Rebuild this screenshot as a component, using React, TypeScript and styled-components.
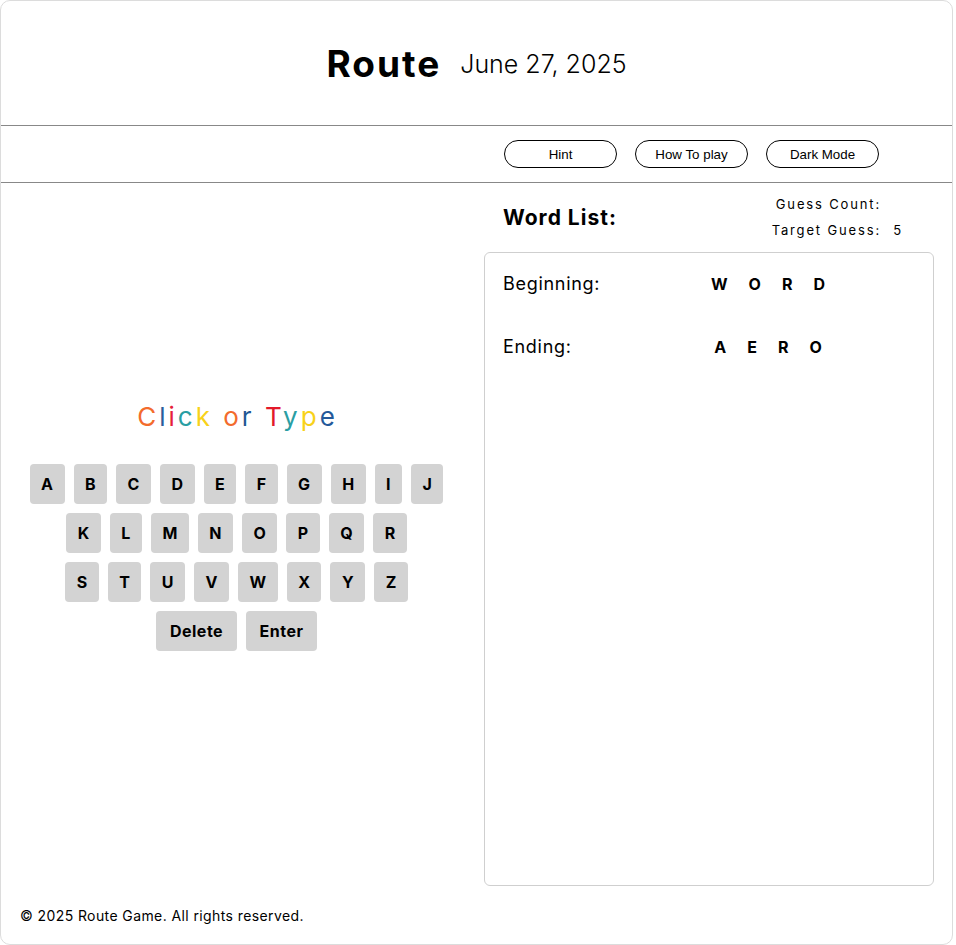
import React from "react";
import styled, { createGlobalStyle } from "styled-components";

const Global = createGlobalStyle`
  html, body { margin: 0; padding: 0; background: #ffffff; }
  body { font-family: "Inter", "Open Sans", sans-serif; color: #000; }
  * { box-sizing: border-box; }
`;

const Card = styled.div`
  width: 953px;
  height: 945px;
  border: 1px solid #dcdcdc;
  border-radius: 10px;
  background: #fff;
  display: flex;
  flex-direction: column;
  overflow: hidden;
`;

const Header = styled.header`
  height: 125px;
  flex-shrink: 0;
  display: flex;
  align-items: center;
  justify-content: center;
  gap: 19px;
  border-bottom: 1px solid #888;
  padding-top: 1px;
`;

const Title = styled.h1`
  margin: 0;
  font-size: 37px;
  font-weight: 700;
  letter-spacing: 2px;
`;

const DateText = styled.span`
  font-size: 25px;
  font-weight: 300;
  letter-spacing: 0;
`;

const NavBar = styled.nav`
  height: 57px;
  flex-shrink: 0;
  display: flex;
  align-items: center;
  justify-content: flex-end;
  gap: 18px;
  padding-right: 73px;
  border-bottom: 1px solid #888;
`;

const PillButton = styled.button`
  width: 113px;
  height: 28px;
  border: 1px solid #000;
  border-radius: 14px;
  background: #fff;
  font-family: "Liberation Sans", Arial, sans-serif;
  font-size: 13.33px;
  color: #000;
  padding: 0;
`;

const Main = styled.main`
  flex: 1;
  display: grid;
  grid-template-columns: 483px 450px;
  min-height: 0;
`;

const LeftColumn = styled.section`
  display: flex;
  flex-direction: column;
  align-items: center;
  justify-content: center;
  padding-bottom: 18px;
  padding-right: 12px;
`;

const Prompt = styled.div`
  font-size: 26px;
  letter-spacing: 3px;
  margin-bottom: 32px;
  padding-left: 2px;
`;

const Letter = styled.span<{ $c: string }>`
  color: ${(p) => p.$c};
`;

const Keyboard = styled.div`
  display: flex;
  flex-direction: column;
  gap: 9px;
  align-items: center;
`;

const KeyRow = styled.div`
  display: flex;
  gap: 9px;
`;

const Key = styled.button<{ $wide?: boolean }>`
  height: 40px;
  min-width: 27px;
  padding: ${(p) => (p.$wide ? "0 13.5px 0 14px" : "0 11px 0 11.5px")};
  border: none;
  border-radius: 4px;
  background: #d3d3d3;
  font-family: "Inter", "Open Sans", sans-serif;
  font-size: 16px;
  font-weight: 700;
  letter-spacing: 0.5px;
  color: #000;
`;

const RightColumn = styled.section`
  display: flex;
  flex-direction: column;
`;

const ListHeader = styled.div`
  height: 69px;
  display: flex;
  align-items: center;
  justify-content: space-between;
  padding: 0 31px 0 19px;
`;

const ListTitle = styled.h2`
  margin: 0;
  font-size: 21px;
  font-weight: 700;
  letter-spacing: 1px;
`;

const Stats = styled.div`
  display: grid;
  grid-template-columns: auto 22px;
  row-gap: 10px;
  font-size: 13px;
  letter-spacing: 1.85px;
  text-align: right;
  margin-top: -2px;
`;

const StatValue = styled.span`
  text-align: right;
`;

const ListBox = styled.div`
  flex: 1;
  border: 1px solid #cfcfcf;
  border-radius: 6px;
  padding: 18px 18px;
  display: flex;
  flex-direction: column;
  gap: 38px;
`;

const WordRow = styled.div`
  display: grid;
  grid-template-columns: 170px 190px;
  align-items: center;
  height: 25px;
`;

const RowLabel = styled.span`
  font-size: 18px;
  font-weight: 400;
  letter-spacing: 0.7px;
`;

const Tiles = styled.div`
  display: flex;
  justify-content: center;
  gap: 21px;
`;

const Tile = styled.span`
  font-size: 16px;
  font-weight: 700;
`;

const Footer = styled.footer`
  height: 58px;
  flex-shrink: 0;
  display: flex;
  align-items: center;
  padding: 0 19px;
  font-size: 14px;
  letter-spacing: 0.4px;
`;

const promptLetters: [string, string][] = [
  ["C", "#f36b2c"],
  ["l", "#2b5d9b"],
  ["i", "#e61f3c"],
  ["c", "#2a9ea3"],
  ["k", "#f8d21a"],
  [" ", "#000"],
  ["o", "#f36b2c"],
  ["r", "#1f5793"],
  [" ", "#000"],
  ["T", "#e3192a"],
  ["y", "#2a9ea3"],
  ["p", "#f8d21a"],
  ["e", "#24599a"],
];

const rows = [
  ["A", "B", "C", "D", "E", "F", "G", "H", "I", "J"],
  ["K", "L", "M", "N", "O", "P", "Q", "R"],
  ["S", "T", "U", "V", "W", "X", "Y", "Z"],
  ["Delete", "Enter"],
];

const words: [string, string[]][] = [
  ["Beginning:", ["W", "O", "R", "D"]],
  ["Ending:", ["A", "E", "R", "O"]],
];

export default function App() {
  return (
    <>
      <Global />
      <Card>
        <Header>
          <Title>Route</Title>
          <DateText>June 27, 2025</DateText>
        </Header>
        <NavBar>
          <PillButton>Hint</PillButton>
          <PillButton>How To play</PillButton>
          <PillButton>Dark Mode</PillButton>
        </NavBar>
        <Main>
          <LeftColumn>
            <Prompt>
              {promptLetters.map(([ch, c], i) => (
                <Letter key={i} $c={c}>
                  {ch}
                </Letter>
              ))}
            </Prompt>
            <Keyboard>
              {rows.map((r, i) => (
                <KeyRow key={i}>
                  {r.map((k) => (
                    <Key key={k} $wide={k.length > 1}>
                      {k}
                    </Key>
                  ))}
                </KeyRow>
              ))}
            </Keyboard>
          </LeftColumn>
          <RightColumn>
            <ListHeader>
              <ListTitle>Word List:</ListTitle>
              <Stats>
                <span>Guess Count:</span>
                <StatValue></StatValue>
                <span>Target Guess:</span>
                <StatValue>5</StatValue>
              </Stats>
            </ListHeader>
            <ListBox>
              {words.map(([label, letters]) => (
                <WordRow key={label}>
                  <RowLabel>{label}</RowLabel>
                  <Tiles>
                    {letters.map((l, i) => (
                      <Tile key={i}>{l}</Tile>
                    ))}
                  </Tiles>
                </WordRow>
              ))}
            </ListBox>
          </RightColumn>
        </Main>
        <Footer>© 2025 Route Game. All rights reserved.</Footer>
      </Card>
    </>
  );
}
